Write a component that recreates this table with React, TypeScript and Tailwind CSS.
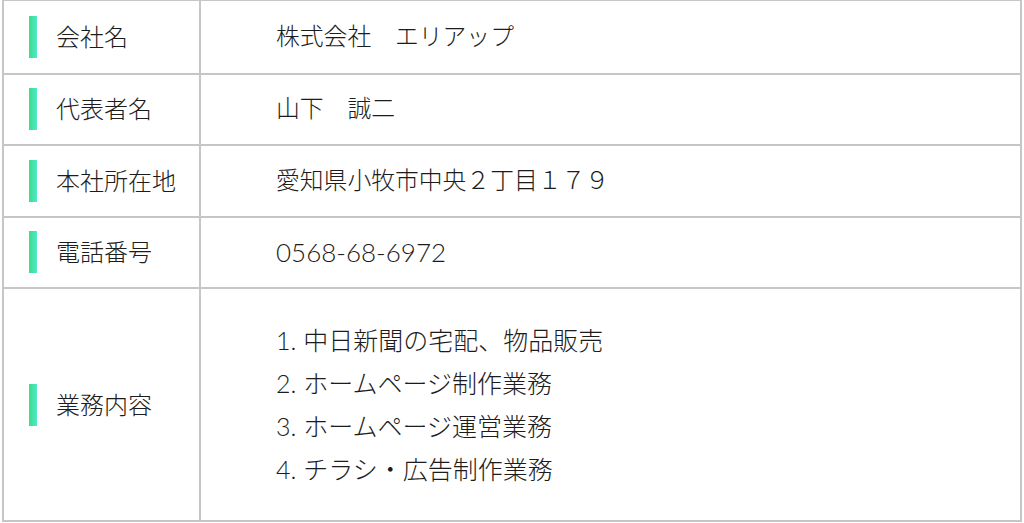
import React from "react";

interface Row {
  label: string;
  value: React.ReactNode;
  tall?: boolean;
}

const services = [
  "中日新聞の宅配、物品販売",
  "ホームページ制作業務",
  "ホームページ運営業務",
  "チラシ・広告制作業務",
];

const rows: Row[] = [
  { label: "会社名", value: "株式会社　エリアップ" },
  { label: "代表者名", value: "山下　誠二" },
  { label: "本社所在地", value: "愛知県小牧市中央２丁目１７９" },
  { label: "電話番号", value: <span className="text-[26px]">0568-68-6972</span> },
  {
    label: "業務内容",
    tall: true,
    value: (
      <ol className="flex flex-col text-[25px]">
        {services.map((s, i) => (
          <li key={s} className="leading-[43px]">
            {i + 1}. {s}
          </li>
        ))}
      </ol>
    ),
  },
];

export default function App() {
  return (
    <div
      className="w-[1024px] h-[523px] bg-white pl-[2px] pr-[2px] pb-[1px] text-[#1c1c1c] font-light"
      style={{ fontFamily: "Lato, 'Noto Sans CJK JP', sans-serif" }}
    >
      <div className="border-2 border-[#c6c6c6] border-t-[1.5px] flex flex-col h-full">
        {rows.map((row, i) => (
          <div
            key={row.label}
            className={`flex ${row.tall ? "flex-1" : "h-[71.5px]"} ${
              i > 0 ? "border-t-2 border-[#c6c6c6]" : ""
            }`}
          >
            {/* label cell */}
            <div className="w-[197px] shrink-0 border-r-2 border-[#c6c6c6] flex items-center pl-[25px]">
              <span className="w-[8px] h-[42px] bg-gradient-to-r from-[#3ade84] to-[#52e6cc]" />
              <span className="ml-[19px] text-[24px]">{row.label}</span>
            </div>
            {/* value cell */}
            <div className="flex-1 flex items-center pl-[75px] text-[23.8px]">
              {row.value}
            </div>
          </div>
        ))}
      </div>
    </div>
  );
}
